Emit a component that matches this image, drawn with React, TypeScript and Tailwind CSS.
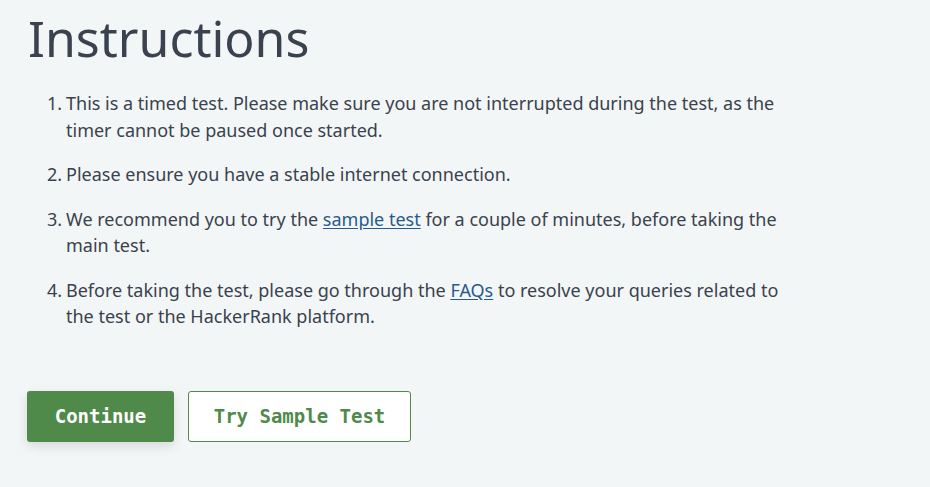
import React from "react";

export default function App() {
  const font = { fontFamily: '"Noto Sans", "Open Sans", sans-serif' };
  return (
    <div className="min-h-[487px] w-full bg-[#f3f6f6] text-[#39424e] overflow-hidden" style={font}>
      <div className="pl-[27px] pt-[0px]">
        <h1 className="text-[50px] leading-[76px] font-normal pl-[1px]">Instructions</h1>
        <ol className="mt-[14px] ml-[20px] w-[745px] text-[18px] leading-[26.5px] list-none">
          <li className="flex mb-[18px]">
            <span className="w-[19px] shrink-0">1.</span>
            <span>This is a timed test. Please make sure you are not interrupted during the test, as the timer cannot be paused once started.</span>
          </li>
          <li className="flex mb-[18px]">
            <span className="w-[19px] shrink-0">2.</span>
            <span>Please ensure you have a stable internet connection.</span>
          </li>
          <li className="flex mb-[18px]">
            <span className="w-[19px] shrink-0">3.</span>
            <span>
              We recommend you to try the{" "}
              <a className="text-[#285a8c] underline underline-offset-2" href="#">sample test</a>{" "}
              for a couple of minutes, before taking the main test.
            </span>
          </li>
          <li className="flex">
            <span className="w-[19px] shrink-0">4.</span>
            <span>
              Before taking the test, please go through the{" "}
              <a className="text-[#285a8c] underline underline-offset-2" href="#">FAQs</a>{" "}
              to resolve your queries related to the test or the HackerRank platform.
            </span>
          </li>
        </ol>
        <div className="mt-[61px] flex gap-[14px]" style={{ fontFamily: '"DejaVu Sans Mono", "Liberation Mono", monospace' }}>
          <button className="h-[51px] w-[147px] rounded-[3px] bg-[#4f8a4b] text-white text-[19px] font-bold shadow-[0_4px_12px_rgba(0,0,0,0.12)]">
            Continue
          </button>
          <button className="h-[51px] w-[223px] rounded-[3px] bg-white border border-[#4f8a4b] text-[#4f8a4b] text-[19px] font-bold">
            Try Sample Test
          </button>
        </div>
      </div>
    </div>
  );
}
